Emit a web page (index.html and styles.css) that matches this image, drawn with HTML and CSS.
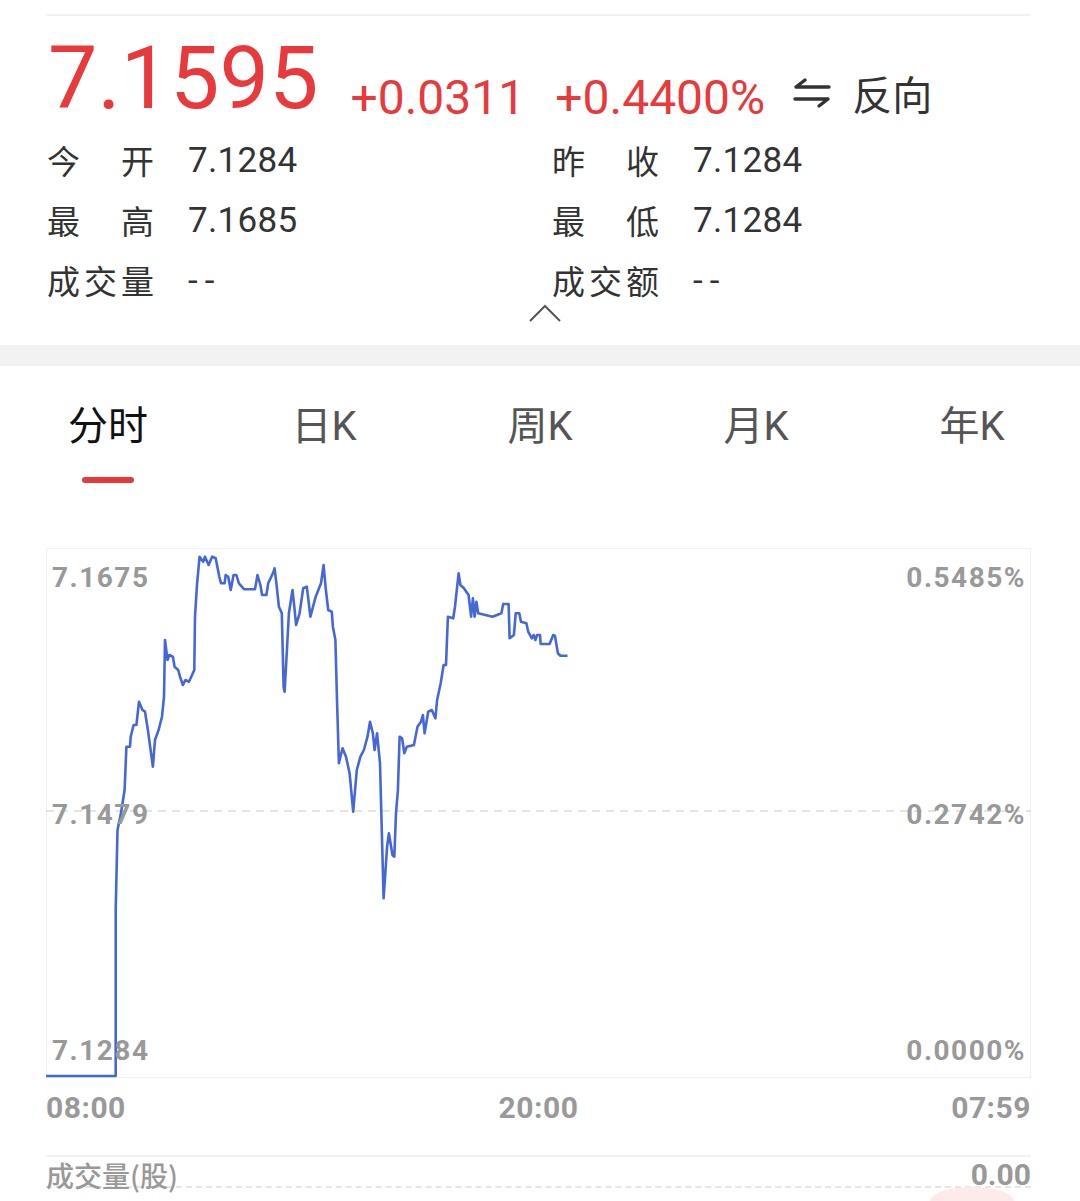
FILE: index.html
```html
<!DOCTYPE html>
<html lang="zh-CN">
<head>
    <meta charset="UTF-8">
    <meta name="viewport" content="width=device-width, initial-scale=1.0">
    <title>USD/CNH 行情</title>
    <link rel="stylesheet" href="styles.css">
</head>
<body>
    <!-- 报价 -->
    <section class="quote">
        <div class="price-row">
            <span class="price">7.1595</span>
            <span class="change">+0.0311</span>
            <span class="change">+0.4400%</span>
            <span class="reverse">
                <svg class="reverse-icon" width="40" height="32" viewBox="0 0 40 32">
                    <path d="M4 10 H37 M4 10 L13 3 M3 22 H36 M36 22 L27 29" fill="none" stroke="#333" stroke-width="3.4" stroke-linecap="round" stroke-linejoin="round"/>
                </svg>
                反向
            </span>
        </div>

        <div class="stats">
            <div class="stat"><span class="stat-label">今开</span><span class="stat-value">7.1284</span></div>
            <div class="stat"><span class="stat-label">昨收</span><span class="stat-value">7.1284</span></div>
            <div class="stat"><span class="stat-label">最高</span><span class="stat-value">7.1685</span></div>
            <div class="stat"><span class="stat-label">最低</span><span class="stat-value">7.1284</span></div>
            <div class="stat"><span class="stat-label">成交量</span><span class="stat-value empty">--</span></div>
            <div class="stat"><span class="stat-label">成交额</span><span class="stat-value empty">--</span></div>
        </div>

        <div class="collapse">
            <svg width="34" height="18" viewBox="0 0 34 18">
                <polyline points="2,17 17,2 32,17" fill="none" stroke="#555" stroke-width="2"/>
            </svg>
        </div>
    </section>

    <div class="divider"></div>

    <!-- 周期切换 -->
    <nav class="tabs">
        <div class="tab active">分时<span class="tab-bar"></span></div>
        <div class="tab">日K</div>
        <div class="tab">周K</div>
        <div class="tab">月K</div>
        <div class="tab">年K</div>
    </nav>

    <!-- 分时图 -->
    <section class="chart-wrap">
        <div class="chart">
            <svg class="chart-svg" width="985" height="530" viewBox="0 0 985 530">
                <line x1="0" y1="263" x2="985" y2="263" stroke="#dcdcdc" stroke-width="1.5" stroke-dasharray="8 6"/>
                <polyline fill="none" stroke="#4667d6" stroke-width="2.6" stroke-linejoin="round"
                    points="0,528 69.7,528 69.7,362 71.5,282 75,265 78.6,242 80.4,198.7 84,198.7 84.7,188.7 87.6,177 90.4,177 93,153.7 96.5,162 99,163.7 101.9,182 106.9,218.7 109,192 112.6,182 116,168.7 118,148.7 119,92 121.5,112 123.3,107 126.9,108.7 128.6,118.7 132.2,122 134,128.7 136.9,137 139.4,132 143,133.7 148.3,122 149,68.7 151.1,35.3 153.6,8.7 157.2,13.7 159,8.7 162.6,17 166.1,8.7 169.7,10.3 173.3,28.7 175,35.3 178.6,35.3 179.7,27 182.2,28.7 184.7,42 187.6,27 190.4,27 192.9,35.3 198.3,41.3 209,41.3 211.5,27 214.4,37 216.1,47 220.4,47 222.2,35.3 226.9,25.3 228.6,20.3 230.4,35.3 232.9,58.7 235.8,65.3 237.6,138.7 238.6,143.7 241.1,98.7 242.9,65.3 246.5,42 248.3,58.7 250.1,77 253.6,65.3 257.2,40.3 260.8,38.7 264.4,68.7 269.7,48.7 275,35.3 277.6,17 279.7,40.3 282.2,62 285.8,63.7 286.9,78.7 289.4,92 291.1,155.3 292.9,215.3 296.5,200.3 300,208.7 303.6,225.3 307.2,263.7 310.8,222 314.4,208.7 317.9,202 321.5,188.7 324,173.7 326.9,185.3 328.6,202 331.1,185.3 334,215.3 337.6,350.3 341.1,298.7 342.9,285.3 346.5,307 348.3,308.7 350,265.3 351.9,242 353.6,188.7 356.1,190.3 358.3,205.3 360.8,198.7 367.9,197 371.5,178.7 375,173.7 376.9,167 378.6,185.3 382.2,163.7 385.8,162 389.4,170.3 391.1,152 394.7,135.3 397.6,117 400,117 401.9,68.7 407.2,70.3 409,58.7 412.6,25.3 414.4,37 417.9,40.3 422.6,47 425.1,68.7 426.9,50.3 428.6,68.7 430.4,53.7 432.2,65.3 446.5,68.7 455.4,65.3 457.2,56 462.6,56 463.6,90.3 467.9,87 469.7,65.3 473.3,65.3 475,73.7 480.4,75.3 482.2,83.7 485.8,90.3 487.6,87 489.4,92 491.1,87 494,87 494.7,96 503.6,96 507.2,87 509,88 511.9,105.3 514.4,107.7 521.5,107.7"/>
            </svg>
            <div class="axis-labels">
                <div class="axis-row"><span>7.1675</span><span>0.5485%</span></div>
                <div class="axis-row"><span>7.1479</span><span>0.2742%</span></div>
                <div class="axis-row"><span>7.1284</span><span>0.0000%</span></div>
            </div>
        </div>

        <div class="time-axis">
            <span>08:00</span>
            <span>20:00</span>
            <span>07:59</span>
        </div>

        <div class="volume">
            <span class="volume-label">成交量(股)</span>
            <span class="volume-value">0.00</span>
        </div>
    </section>

    <div class="float-btn"></div>
</body>
</html>
```

FILE: styles.css
```css
html {
    overflow: hidden;
}

body {
    margin: 0;
    padding: 0;
    background-color: #fff;
    font-family: Roboto, "Noto Sans CJK SC", sans-serif;
    color: #333;
    width: 1080px;
    height: 1201px;
    overflow: hidden;
    position: relative;
}

/* 报价区 */
.quote {
    margin: 0 49px 0 46px;
    padding-top: 14px;
}

.price-row {
    border-top: 2px solid #f2f2f2;
    display: flex;
    align-items: flex-end;
    padding-top: 18px;
}

.price {
    font-size: 88px;
    line-height: 88px;
    color: #e8393d;
    margin-left: 2px;
}

.change {
    font-size: 48px;
    line-height: 48px;
    color: #e8393d;
    margin-left: 32px;
}

.change + .change {
    margin-left: 30px;
}

.reverse {
    display: flex;
    align-items: center;
    font-size: 40px;
    color: #333;
    margin-left: 27px;
    font-family: "Noto Sans CJK SC", sans-serif;
}

.reverse-icon {
    margin-right: 20px;
}

.stats {
    display: grid;
    grid-template-columns: 505px 1fr;
    grid-auto-rows: 60px;
    margin-top: 8px;
    margin-left: 1px;
}

.stat {
    display: flex;
    align-items: center;
}

.stat-label {
    width: 107px;
    font-size: 33px;
    font-family: "Noto Sans CJK SC", sans-serif;
    text-align: justify;
    text-align-last: justify;
    color: #333;
}

.stat-value {
    margin-left: 34px;
    font-size: 35px;
    color: #333;
    letter-spacing: 0.3px;
}

.stat-value.empty {
    letter-spacing: 7px;
}

.collapse {
    display: flex;
    justify-content: center;
    height: 20px;
    margin-top: -6px;
    margin-bottom: 21px;
    padding-left: 12px;
}

.divider {
    height: 21px;
    background-color: #f2f2f2;
}

/* 周期切换 */
.tabs {
    display: grid;
    grid-template-columns: repeat(5, 1fr);
    padding-top: 36px;
    height: 182px;
    box-sizing: border-box;
}

.tab {
    display: flex;
    flex-direction: column;
    align-items: center;
    font-size: 40px;
    line-height: 50px;
    color: #555;
    font-family: Roboto, "Noto Sans CJK SC", sans-serif;
}

.tab.active {
    color: #111;
}

.tab-bar {
    width: 52px;
    height: 6px;
    border-radius: 3px;
    background-color: #e5393e;
    margin-top: 25px;
}

/* 分时图 */
.chart-wrap {
    margin: 0 49px 0 46px;
}

.chart {
    position: relative;
    height: 530px;
    border: 1px solid #f0f0f0;
    box-sizing: border-box;
}

.chart-svg {
    display: block;
    position: absolute;
    left: -1px;
    top: -1px;
}

.axis-labels {
    position: absolute;
    inset: 0;
    display: flex;
    flex-direction: column;
    justify-content: space-between;
    padding: 12px 4px 9px 5px;
}

.axis-row {
    display: flex;
    justify-content: space-between;
    font-size: 28px;
    line-height: 34px;
    font-weight: bold;
    color: #999;
    letter-spacing: 1.5px;
}

.time-axis {
    display: flex;
    justify-content: space-between;
    font-size: 30px;
    line-height: 40px;
    font-weight: bold;
    color: #999;
    margin-top: 10px;
    letter-spacing: 0.5px;
}

.volume {
    margin-top: 27px;
    border-top: 2px solid #f2f2f2;
    height: 29px;
    border-bottom: 2px dashed #e6e6e6;
    display: flex;
    justify-content: space-between;
    line-height: 36px;
    color: #999;
    font-weight: bold;
}

.volume-label {
    font-size: 28px;
    font-family: "Noto Sans CJK SC", sans-serif;
    font-weight: 500;
}

.volume-value {
    font-size: 30px;
}

/* 悬浮按钮（被遮挡部分） */
.float-btn {
    position: absolute;
    left: 930px;
    bottom: 0;
    width: 84px;
    height: 14px;
    border-radius: 42px 42px 0 0 / 14px 14px 0 0;
    background-color: #fdeaea;
}
```
